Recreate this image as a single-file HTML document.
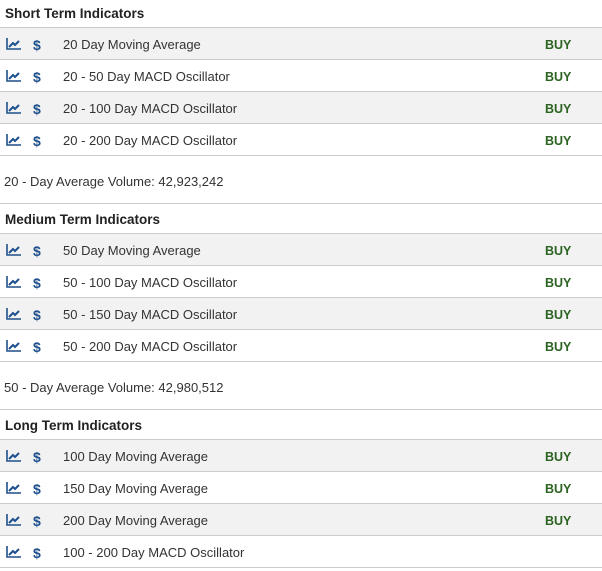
<!DOCTYPE html>
<html><head><style>
*{margin:0;padding:0;box-sizing:border-box}
body{width:602px;height:571px;background:#fff;font-family:"Liberation Sans",sans-serif;font-size:13px;color:#333;overflow:hidden}
.h{height:28px;line-height:28px;font-weight:bold;font-size:13.5px;padding-left:5px;border-bottom:1px solid #ccc;color:#222}
.h2{height:30px;line-height:31px}
.r{height:32px;border-bottom:1px solid #ccc;position:relative;line-height:33px}
.g{background:#f2f2f2}
.r svg{position:absolute;left:6px;top:10px}
.d{position:absolute;left:33px;top:1px;color:#1d4f8c;font-weight:bold;font-size:14px}
.t{position:absolute;left:63px}
.b{position:absolute;left:545px;top:1px;font-weight:bold;color:#2b6320;font-size:12.5px}
.v{height:48px;line-height:51px;padding-left:4px;border-bottom:1px solid #ccc}
</style></head><body>
<div class="h">Short Term Indicators</div>
<div class="r g"><svg width="15" height="12" viewBox="0 0 15 12"><path d="M1 0V11H15" stroke="#1d4f8c" stroke-width="1.6" fill="none"/><path d="M3 9L7 5L9 7L13 3" stroke="#1d4f8c" stroke-width="2" fill="none"/></svg><span class="d">$</span><span class="t">20 Day Moving Average</span><span class="b">BUY</span></div>
<div class="r"><svg width="15" height="12" viewBox="0 0 15 12"><path d="M1 0V11H15" stroke="#1d4f8c" stroke-width="1.6" fill="none"/><path d="M3 9L7 5L9 7L13 3" stroke="#1d4f8c" stroke-width="2" fill="none"/></svg><span class="d">$</span><span class="t">20 - 50 Day MACD Oscillator</span><span class="b">BUY</span></div>
<div class="r g"><svg width="15" height="12" viewBox="0 0 15 12"><path d="M1 0V11H15" stroke="#1d4f8c" stroke-width="1.6" fill="none"/><path d="M3 9L7 5L9 7L13 3" stroke="#1d4f8c" stroke-width="2" fill="none"/></svg><span class="d">$</span><span class="t">20 - 100 Day MACD Oscillator</span><span class="b">BUY</span></div>
<div class="r"><svg width="15" height="12" viewBox="0 0 15 12"><path d="M1 0V11H15" stroke="#1d4f8c" stroke-width="1.6" fill="none"/><path d="M3 9L7 5L9 7L13 3" stroke="#1d4f8c" stroke-width="2" fill="none"/></svg><span class="d">$</span><span class="t">20 - 200 Day MACD Oscillator</span><span class="b">BUY</span></div>
<div class="v">20 - Day Average Volume: 42,923,242</div>
<div class="h h2">Medium Term Indicators</div>
<div class="r g"><svg width="15" height="12" viewBox="0 0 15 12"><path d="M1 0V11H15" stroke="#1d4f8c" stroke-width="1.6" fill="none"/><path d="M3 9L7 5L9 7L13 3" stroke="#1d4f8c" stroke-width="2" fill="none"/></svg><span class="d">$</span><span class="t">50 Day Moving Average</span><span class="b">BUY</span></div>
<div class="r"><svg width="15" height="12" viewBox="0 0 15 12"><path d="M1 0V11H15" stroke="#1d4f8c" stroke-width="1.6" fill="none"/><path d="M3 9L7 5L9 7L13 3" stroke="#1d4f8c" stroke-width="2" fill="none"/></svg><span class="d">$</span><span class="t">50 - 100 Day MACD Oscillator</span><span class="b">BUY</span></div>
<div class="r g"><svg width="15" height="12" viewBox="0 0 15 12"><path d="M1 0V11H15" stroke="#1d4f8c" stroke-width="1.6" fill="none"/><path d="M3 9L7 5L9 7L13 3" stroke="#1d4f8c" stroke-width="2" fill="none"/></svg><span class="d">$</span><span class="t">50 - 150 Day MACD Oscillator</span><span class="b">BUY</span></div>
<div class="r"><svg width="15" height="12" viewBox="0 0 15 12"><path d="M1 0V11H15" stroke="#1d4f8c" stroke-width="1.6" fill="none"/><path d="M3 9L7 5L9 7L13 3" stroke="#1d4f8c" stroke-width="2" fill="none"/></svg><span class="d">$</span><span class="t">50 - 200 Day MACD Oscillator</span><span class="b">BUY</span></div>
<div class="v">50 - Day Average Volume: 42,980,512</div>
<div class="h h2">Long Term Indicators</div>
<div class="r g"><svg width="15" height="12" viewBox="0 0 15 12"><path d="M1 0V11H15" stroke="#1d4f8c" stroke-width="1.6" fill="none"/><path d="M3 9L7 5L9 7L13 3" stroke="#1d4f8c" stroke-width="2" fill="none"/></svg><span class="d">$</span><span class="t">100 Day Moving Average</span><span class="b">BUY</span></div>
<div class="r"><svg width="15" height="12" viewBox="0 0 15 12"><path d="M1 0V11H15" stroke="#1d4f8c" stroke-width="1.6" fill="none"/><path d="M3 9L7 5L9 7L13 3" stroke="#1d4f8c" stroke-width="2" fill="none"/></svg><span class="d">$</span><span class="t">150 Day Moving Average</span><span class="b">BUY</span></div>
<div class="r g"><svg width="15" height="12" viewBox="0 0 15 12"><path d="M1 0V11H15" stroke="#1d4f8c" stroke-width="1.6" fill="none"/><path d="M3 9L7 5L9 7L13 3" stroke="#1d4f8c" stroke-width="2" fill="none"/></svg><span class="d">$</span><span class="t">200 Day Moving Average</span><span class="b">BUY</span></div>
<div class="r"><svg width="15" height="12" viewBox="0 0 15 12"><path d="M1 0V11H15" stroke="#1d4f8c" stroke-width="1.6" fill="none"/><path d="M3 9L7 5L9 7L13 3" stroke="#1d4f8c" stroke-width="2" fill="none"/></svg><span class="d">$</span><span class="t">100 - 200 Day MACD Oscillator</span></div>
</body></html>
